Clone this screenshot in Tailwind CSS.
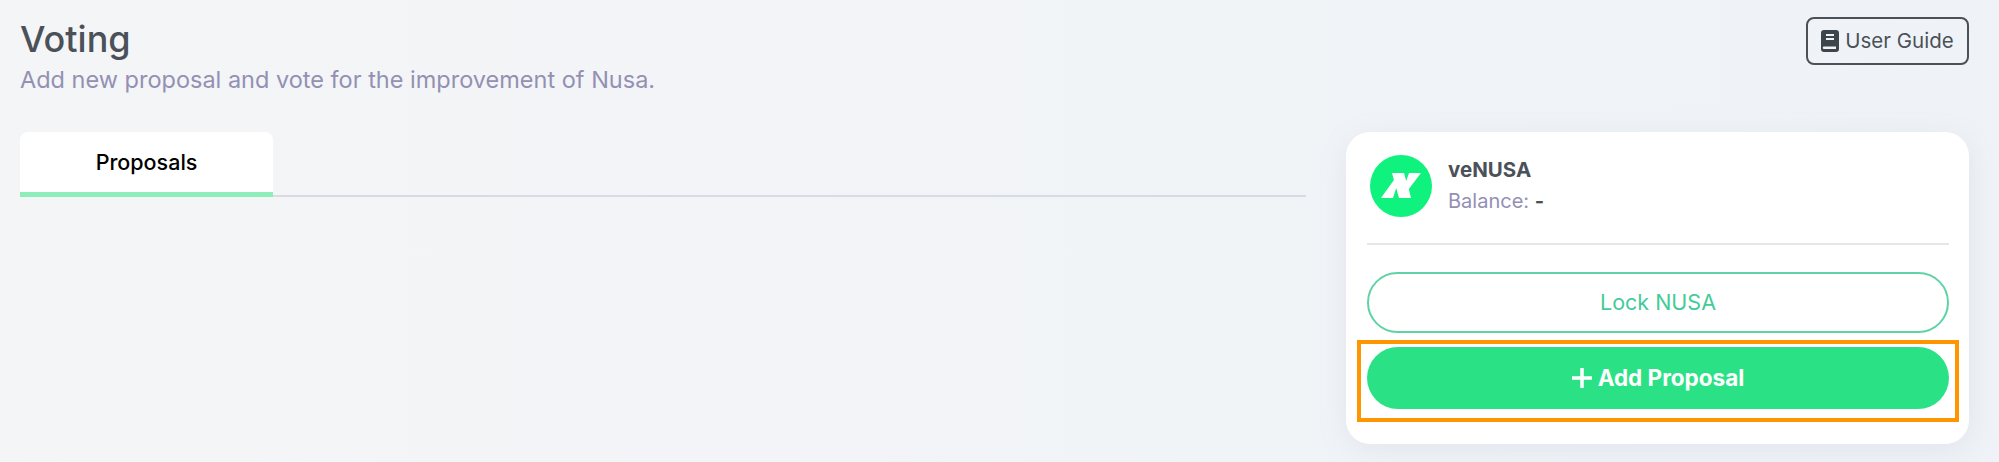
<!DOCTYPE html>
<html lang="en">
<head>
  <meta charset="UTF-8"/>
  <title>Voting</title>
  <script src="https://cdn.jsdelivr.net/npm/@tailwindcss/browser@4"></script>
</head>
<body class="h-[462px] overflow-hidden bg-gradient-to-r from-[#f4f5f7] to-[#eff3f7] font-['Inter',sans-serif]">
  <div class="pl-5 pr-[30px] pt-[17px]">
    <!-- header -->
    <header class="flex justify-between items-start h-[115px]">
      <div>
        <h1 class="text-[36px] leading-[44px] font-medium text-[#4b5158]">Voting</h1>
        <p class="text-[23.500px] leading-[28px] mt-[5px] text-[#9390b3]">Add new proposal and vote for the improvement of Nusa.</p>
      </div>
      <button class="flex items-center justify-center gap-[6px] w-[163px] h-[48px] border-2 border-[#4b5158] rounded-lg text-[20.500px] text-[#4b5158]">
        <svg class="w-[18px] h-[22px]" viewBox="0 0 18 22">
          <path fill="#3f454d" fill-rule="evenodd" d="M3 0h12a3 3 0 0 1 3 3v16a3 3 0 0 1-3 3H3a3 3 0 0 1-3-3V3a3 3 0 0 1 3-3zM5 4v2h8V4zM5 8v2h8V8zM3 16.500a1 1 0 0 0 0 2.500h12v-2.500z"/>
        </svg>
        User Guide
      </button>
    </header>

    <main class="flex justify-between items-start">
      <!-- tabs -->
      <div class="w-[1286px] h-[65px] border-b-2 border-[#d8dbe5]">
        <div class="w-[253px] h-[65px] bg-white rounded-t-lg border-b-[5px] border-[#8eedb9] flex items-center justify-center text-[21.500px] font-medium text-black">Proposals</div>
      </div>

      <!-- veNUSA card -->
      <section class="w-[623px] h-[312px] bg-white rounded-[24px] shadow-[0_6px_30px_rgba(120,135,165,0.12)] pl-[21px] pr-[20px] pt-[23px]">
        <div class="flex items-start gap-[16px] px-[3px] h-[88px]">
          <svg class="w-[62px] h-[62px]" viewBox="0 0 62 62">
            <circle cx="31" cy="31" r="31" fill="#0ff27e"/>
            <path fill="#fff" d="M22 18H34L36.200 26 39 18H51L38.800 34 41 43H29L26.200 33 23 43H11L23.900 25z"/>
          </svg>
          <div>
            <div class="text-[20.500px] leading-[24px] font-bold text-[#4b5158] mt-[3px]">veNUSA</div>
            <div class="text-[20px] leading-[26px] mt-[6px] text-[#9390b3]">Balance: <span class="font-bold text-[#4b5158]">-</span></div>
          </div>
        </div>
        <div class="h-[2px] bg-[#e4e6ea]"></div>
        <button class="block w-full h-[61px] mt-[27px] rounded-full border-2 border-[#5fd3a6] text-[21.500px] text-[#45cb9a]">Lock NUSA</button>
        <div class="-mx-[10px] mt-[7px] h-[82px] border-[4px] border-[#ff9500] p-[3px] px-[6px]">
          <button class="flex items-center justify-center gap-[6px] w-full h-[62px] rounded-full bg-[#2ae285] text-[22.500px] font-bold text-white">
            <svg class="w-[20px] h-[20px]" viewBox="0 0 20 20"><path stroke="#fff" stroke-width="3.500" d="M10 0v20M0 10h20"/></svg>
            Add Proposal
          </button>
        </div>
      </section>
    </main>
  </div>
</body>
</html>
